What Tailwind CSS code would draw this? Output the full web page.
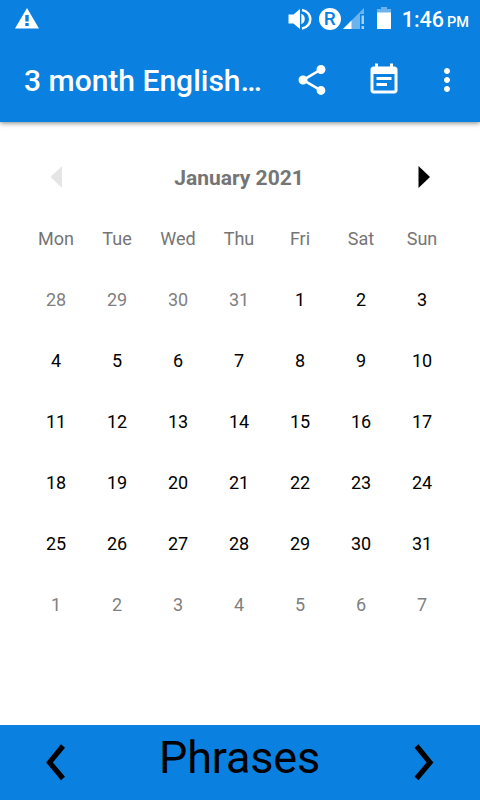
<!DOCTYPE html>
<html lang="en">
<head>
    <meta charset="UTF-8">
    <meta name="viewport" content="width=device-width, initial-scale=1.0">
    <title>3 month English</title>
    <script src="https://cdn.jsdelivr.net/npm/@tailwindcss/browser@4"></script>
</head>
<body class="bg-white font-['Roboto',sans-serif]">
    <div class="w-[480px] h-[800px] flex flex-col overflow-hidden">
        <header class="h-[122px] shrink-0 bg-[#0a80e0] text-white shadow-[0_1px_5px_rgba(0,0,0,0.5)]">
            <!-- status bar -->
            <div class="h-[38px] flex items-center pl-[15px] pr-[11px]">
                <svg class="w-6 h-[21px] mb-px" viewBox="0 0 24 21">
                    <path fill="#fff" fill-rule="evenodd" d="M12 0L24 20.5H0zM10.3 7v6.5h3.4V7zm0 8v3h3.4v-3z"/>
                </svg>
                <svg class="w-6 h-6 ml-auto" viewBox="0 0 24 24">
                    <path fill="#fff" d="M0.500 7.500H5.500L12 2V22L5.500 16.500H0.500z"/>
                    <path fill="#fff" d="M13.300 6.800c4.600 1.400 4.600 9 0 10.400z"/>
                    <path fill="none" stroke="#fff" stroke-width="2.600" d="M14 3c11 2.200 11 16.200 0 18.400"/>
                </svg>
                <div class="w-[22px] h-[22px] ml-[7px] rounded-full bg-white text-[#0a80e0] text-[19px] leading-[22px] font-medium flex items-center justify-center">R</div>
                <svg class="w-[21px] h-[22px] ml-[2px]" viewBox="0 0 21 22">
                    <path fill="#6bb3ec" d="M0 21L21 0V6H17V21z"/>
                    <path fill="#fff" d="M0 21L8.500 12.500V21z"/>
                    <path fill="#a4d0f4" d="M18.500 7.500h2.500v8.500h-2.500zM18.500 18h2.500v3h-2.500z"/>
                </svg>
                <svg class="w-[14px] h-[22px] ml-[13px] mb-[2px]" viewBox="0 0 14 22">
                    <path fill="#6bb3ec" d="M4 0h6v2h4v4H0V2h4z"/>
                    <path fill="#fff" d="M0 5.500h14v16.500H0z"/>
                </svg>
                <div class="ml-[11px] flex items-baseline leading-none font-medium mt-px">
                    <span class="text-[21.5px]">1:46</span>
                    <span class="text-[14.500px] ml-[3px]">PM</span>
                </div>
            </div>
            <!-- toolbar -->
            <div class="h-[84px] flex items-center pl-6 pr-[15px]">
                <h1 class="w-[240px] text-[30px] font-medium whitespace-nowrap">3 month English…</h1>
                <svg class="w-9 h-9 ml-[30px]" viewBox="0 0 24 24" fill="#fff">
                    <path d="M18 16.080c-.76 0-1.440.3-1.960.77L8.910 12.700c.05-.23.09-.46.09-.7s-.04-.47-.09-.7l7.050-4.110c.54.5 1.250.81 2.040.81 1.660 0 3-1.340 3-3s-1.340-3-3-3-3 1.340-3 3c0 .24.04.47.09.7L8.040 9.810C7.500 9.310 6.790 9 6 9c-1.660 0-3 1.340-3 3s1.340 3 3 3c.79 0 1.500-.31 2.040-.81l7.120 4.160c-.05.21-.08.43-.08.65 0 1.610 1.310 2.920 2.920 2.920s2.920-1.310 2.920-2.920-1.310-2.920-2.920-2.920z"/>
                </svg>
                <svg class="w-9 h-9 ml-9" viewBox="0 0 24 24" fill="#fff">
                    <path d="M17 10H7v2h10v-2zm2-7h-1V1h-2v2H8V1H6v2H5c-1.110 0-1.990.9-1.990 2L3 19c0 1.100.89 2 2 2h14c1.100 0 2-.9 2-2V5c0-1.100-.9-2-2-2zm0 16H5V8h14v11zm-5-5H7v2h7v-2z"/>
                </svg>
                <svg class="w-9 h-9 ml-[27px]" viewBox="0 0 24 24" fill="#fff">
                    <path d="M12 8c1.100 0 2-.9 2-2s-.9-2-2-2-2 .9-2 2 .9 2 2 2zm0 2c-1.100 0-2 .9-2 2s.9 2 2 2 2-.9 2-2-.9-2-2-2zm0 6c-1.100 0-2 .9-2 2s.9 2 2 2 2-.9 2-2-.9-2-2-2z"/>
                </svg>
            </div>
        </header>

        <main class="flex-1 pt-[25px] pl-[25.5px] pr-[26.5px]">
            <div class="h-[61px] flex items-center justify-between pl-[24.5px] pr-[23.5px]">
                <svg class="w-3 h-[22px] mb-px" viewBox="0 0 12 22"><path fill="#e5e5e5" d="M12 0v22L0.500 11z"/></svg>
                <div class="text-[21px] font-bold text-[#757575] pt-[2px] pr-[2px]">January 2021</div>
                <svg class="w-3 h-[22px] mb-px" viewBox="0 0 12 22"><path fill="#000" d="M0.500 0v22L12 11z"/></svg>
            </div>
            <div id="calendar" class="grid grid-cols-[repeat(7,61px)] auto-rows-[61px] text-[18px] text-center leading-[61px]"></div>
        </main>

        <footer class="h-[75px] shrink-0 bg-[#0a80e0] flex items-start justify-between pl-[46px] pr-[46px]">
            <svg class="w-5 h-[38px] mt-[18px]" viewBox="0 0 20 38"><path fill="none" stroke="#000" stroke-width="5.200" d="M17 3L3.500 19.500L17 35.500"/></svg>
            <div class="text-[45px] leading-[66px] tracking-[-0.2px] pr-px text-black">Phrases</div>
            <svg class="w-5 h-[38px] mt-[18px]" viewBox="0 0 20 38"><path fill="none" stroke="#000" stroke-width="5.200" d="M2.500 3L16 19.500L2.500 35.500"/></svg>
        </footer>
    </div>
    <script>
        const calendar = document.getElementById('calendar');

        function addCell(text, className) {
            const cell = document.createElement('div');
            cell.textContent = text;
            cell.className = className;
            calendar.appendChild(cell);
        }

        ['Mon', 'Tue', 'Wed', 'Thu', 'Fri', 'Sat', 'Sun'].forEach(day => addCell(day, 'text-[#757575]'));
        for (let day = 28; day <= 31; day++) addCell(day, 'text-[#808080]');
        for (let day = 1; day <= 31; day++) addCell(day, 'text-black');
        for (let day = 1; day <= 7; day++) addCell(day, 'text-[#808080]');
    </script>
</body>
</html>
